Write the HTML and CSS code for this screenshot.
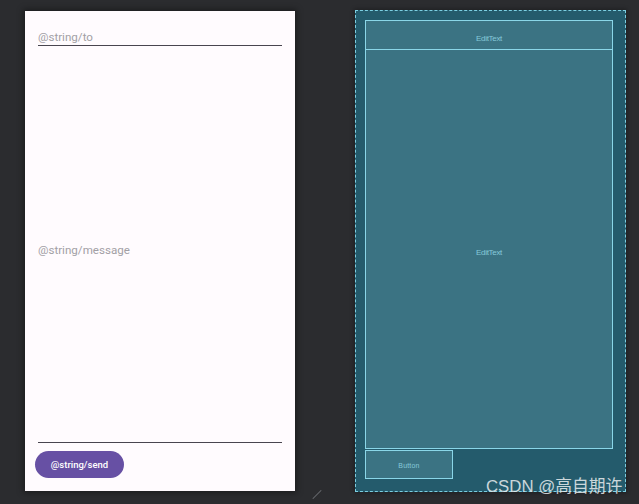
FILE: index.html
```html
<!DOCTYPE html>
<html>
<head>
<meta charset="utf-8">
<link rel="stylesheet" href="styles.css">
</head>
<body>
<div class="stage">
  <div class="phone">
    <div class="field field-to"><span class="hint">@string/to</span></div>
    <div class="field field-msg"><span class="hint">@string/message</span></div>
    <div class="btn-row"><button class="send">@string/send</button></div>
  </div>
  <div class="blueprint">
    <div class="bp-box bp-to"><span class="bp-label">EditText</span></div>
    <div class="bp-box bp-msg"><span class="bp-label">EditText</span></div>
    <div class="bp-box bp-btn"><span class="bp-label bp-small">Button</span></div>
  </div>
</div>
<div class="resize"></div>
<div class="watermark">CSDN @高自期许</div>
</body>
</html>
```
FILE: styles.css
```css
html, body {
  margin: 0;
  padding: 0;
  width: 639px;
  height: 504px;
  overflow: hidden;
  background: #2b2c2f;
  font-family: Roboto, "Noto Sans", sans-serif;
}
.stage {
  display: flex;
  align-items: flex-start;
  padding: 10px 0 0 25px;
  gap: 60px;
}
.phone {
  margin-top: 1px;
  width: 270px;
  height: 480px;
  background: #fffbfe;
  box-shadow: 0 0 6px 2px rgba(0,0,0,0.35);
  display: flex;
  flex-direction: column;
  box-sizing: border-box;
  padding: 0 13px;
}
.field {
  border-bottom: 1px solid #49454f;
  display: flex;
  color: #a29fa5;
  font-size: 11.6px;
}
.field-to {
  height: 35px;
  align-items: flex-end;
  padding-bottom: 1px;
  box-sizing: border-box;
}
.field-msg {
  height: 397px;
  align-items: center;
  box-sizing: border-box;
  padding-top: 12px;
}
.btn-row {
  padding-top: 8px;
  margin-left: -3px;
}
.send {
  width: 89px;
  height: 27px;
  border: none;
  border-radius: 14px;
  background: #6750a4;
  color: #ffffff;
  font-family: Roboto, "Noto Sans", sans-serif;
  font-weight: 500;
  font-size: 9.5px;
  padding: 0;
}
.blueprint {
  width: 271px;
  height: 482px;
  box-sizing: border-box;
  background: #245b6c;
  border: 1px dashed #7ccfe2;
  padding: 9px 12px 0 9px;
  display: flex;
  flex-direction: column;
  box-shadow: 0 0 4px 1px rgba(0,0,0,0.3);
}
.bp-box {
  background: #3b7383;
  border: 1px solid #8ad6e8;
  box-sizing: border-box;
  display: flex;
  align-items: center;
  justify-content: center;
}
.bp-to {
  height: 30px;
  padding-top: 6px;
}
.bp-msg {
  height: 399px;
  border-top: none;
  padding-top: 6px;
}
.bp-btn {
  margin-top: 1px;
  width: 88px;
  height: 29px;
  padding-top: 1px;
}
.bp-label {
  color: #86c9da;
  font-family: "Liberation Sans", sans-serif;
  font-size: 8px;
  letter-spacing: -0.3px;
}
.bp-small {
  font-size: 7px;
  letter-spacing: 0.2px;
}
.resize {
  position: absolute;
  left: 311px;
  top: 494px;
  width: 12px;
  height: 1px;
  background: #6a6c70;
  transform: rotate(-45deg);
}
.watermark {
  position: absolute;
  left: 486px;
  top: 473px;
  color: rgba(235,238,240,0.85);
  font-family: "Liberation Sans", "Noto Sans CJK SC", sans-serif;
  font-size: 16.8px;
}
```
